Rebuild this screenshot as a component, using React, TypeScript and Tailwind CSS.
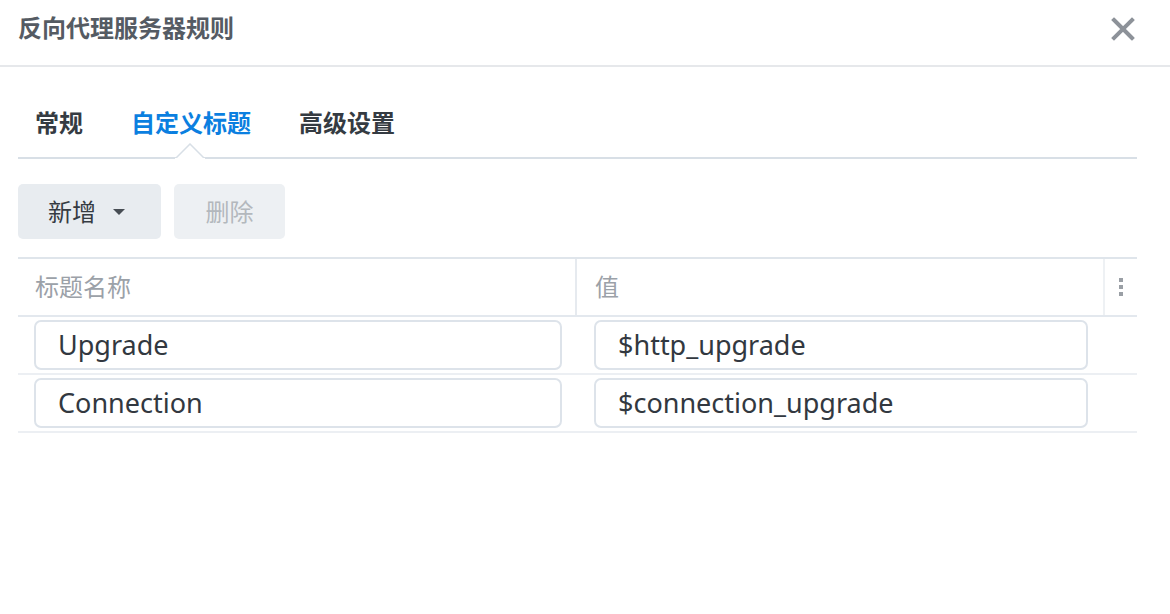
import React from "react";

const cjk = { fontFamily: '"Noto Sans", "Noto Sans CJK SC", sans-serif' };

function Input({ value }: { value: string }) {
  return (
    <div className="h-[50px] rounded-[7px] border-2 border-[#dde3ea] bg-white flex items-center px-[22px] text-[27px] text-[#323840]">
      {value}
    </div>
  );
}

export default function App() {
  const rows = [
    ["Upgrade", "$http_upgrade"],
    ["Connection", "$connection_upgrade"],
  ];
  return (
    <div className="w-[1170px] h-[614px] bg-white overflow-hidden" style={cjk}>
      {/* Header */}
      <div className="h-[67px] border-b-2 border-[#e6e8eb] flex items-start justify-between pl-[18px] pr-[35px] pt-[12px]">
        <div className="text-[24px] leading-[32px] font-bold text-[#555b63]">反向代理服务器规则</div>
        <svg width="24" height="24" viewBox="0 0 24 24" className="mt-[5px]">
          <path d="M3 3 L21 21 M21 3 L3 21" stroke="#8d9299" strokeWidth="4" strokeLinecap="square" />
        </svg>
      </div>

      <div className="pl-[18px] pr-[33px]">
        {/* Tabs */}
        <div className="flex gap-[48px] pl-[17px] pt-[40px] pb-[18px] border-b-2 border-[#d8dfe6]">
          <div className="text-[24px] leading-[32px] font-bold text-[#353b42]">常规</div>
          <div className="relative text-[24px] leading-[32px] font-bold text-[#0b7fe0]">
            自定义标题
            <svg width="30" height="16" viewBox="0 0 30 16" className="absolute left-[44px] top-[36px]">
              <polygon points="0,16 15,1 30,16" fill="#ffffff" stroke="#d8dfe6" strokeWidth="1.5" />
              <rect x="0" y="15" width="30" height="3" fill="#ffffff" />
            </svg>
          </div>
          <div className="text-[24px] leading-[32px] font-bold text-[#353b42]">高级设置</div>
        </div>

        {/* Toolbar */}
        <div className="flex gap-[13px] mt-[25px]">
          <div className="w-[143px] h-[55px] rounded-[5px] bg-[#e8ecf0] flex items-center pl-[30px] text-[24px] text-[#353b42]">
            新增
            <svg width="12" height="7" viewBox="0 0 12 7" className="ml-[17px] mt-[2px]">
              <polygon points="0,0 12,0 6,6" fill="#474d54" />
            </svg>
          </div>
          <div className="w-[111px] h-[55px] rounded-[5px] bg-[#edf0f3] flex items-center justify-center text-[24px] text-[#b3b8bd]">
            删除
          </div>
        </div>

        {/* Table */}
        <div className="mt-[18px] border-t-2 border-[#dfe5eb]">
          <div className="flex h-[58px] border-b-2 border-[#e3e8ee]">
            <div className="w-[559px] border-r-2 border-[#e6eaef] flex items-center pl-[17px] text-[24px] text-[#9ba1a8]">
              标题名称
            </div>
            <div className="w-[528px] border-r-2 border-[#eef1f4] flex items-center pl-[18px] text-[24px] text-[#9ba1a8]">
              值
            </div>
            <div className="flex-1 flex flex-col items-center justify-center gap-[3px] pr-[1px]">
              <span className="w-[4px] h-[4px] bg-[#9a9fa5]" />
              <span className="w-[4px] h-[4px] bg-[#9a9fa5]" />
              <span className="w-[4px] h-[4px] bg-[#9a9fa5]" />
            </div>
          </div>
          {rows.map(([k, v]) => (
            <div key={k} className="flex h-[58px] items-center border-b-2 border-[#eceff3]">
              <div className="w-[559px] pl-[16px] pr-[15px]">
                <Input value={k} />
              </div>
              <div className="w-[528px] pl-[17px] pr-[17px]">
                <Input value={v} />
              </div>
            </div>
          ))}
        </div>
      </div>
    </div>
  );
}
